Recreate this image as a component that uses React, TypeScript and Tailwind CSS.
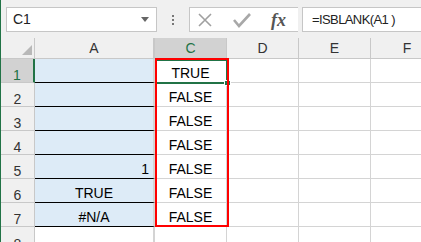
import React from "react";

const rows = [
  { n: 1, a: "", align: "", c: "TRUE" },
  { n: 2, a: "", align: "", c: "FALSE" },
  { n: 3, a: "", align: "", c: "FALSE" },
  { n: 4, a: "", align: "", c: "FALSE" },
  { n: 5, a: "1", align: "right", c: "FALSE" },
  { n: 6, a: "TRUE", align: "center", c: "FALSE" },
  { n: 7, a: "#N/A", align: "center", c: "FALSE" },
];

const font = { fontFamily: '"Liberation Sans", Arial, sans-serif' };

export default function App() {
  return (
    <div
      className="relative w-[421px] h-[242px] overflow-hidden bg-[#f0f0f0] border-l border-[#217346] text-[14px] text-black"
      style={font}
    >
      {/* Formula bar */}
      <div className="flex items-center h-[38px] pt-[1px]">
        <div className="ml-[5px] w-[151px] h-[25px] bg-white border border-[#c6c6c6] flex items-center justify-between pl-[6px] pr-[7px]">
          <span className="text-[14px] text-[#222]">C1</span>
          <svg width="8" height="5" viewBox="0 0 8 5">
            <path d="M0 0h8L4 5z" fill="#666" />
          </svg>
        </div>
        <div className="w-[32px] flex flex-col items-center gap-[2px]">
          <span className="w-[2px] h-[2px] bg-[#777]" />
          <span className="w-[2px] h-[2px] bg-[#777]" />
          <span className="w-[2px] h-[2px] bg-[#777]" />
        </div>
        <div className="w-[109px] h-[25px] bg-white border border-[#c6c6c6] border-r-0 flex items-center pl-[7px]">
          <svg width="16" height="16" viewBox="0 0 16 16" className="shrink-0">
            <path d="M2 2l12 12M14 2L2 14" stroke="#a0a0a0" strokeWidth="1.6" fill="none" />
          </svg>
          <svg width="18" height="16" viewBox="0 0 18 16" className="ml-[20px] shrink-0">
            <path d="M1 8l5 6L17 2" stroke="#a8a8a8" strokeWidth="2.6" fill="none" />
          </svg>
          <span
            className="ml-[20px] italic font-bold text-[18px] text-[#555] leading-none"
            style={{ fontFamily: '"Liberation Serif", "Times New Roman", serif' }}
          >
            fx
          </span>
        </div>
        <div className="ml-[4px] flex-1 h-[25px] bg-white border border-[#c6c6c6] border-r-0 flex items-center pl-[9px]">
          <span className="text-[13px] tracking-[-0.6px] text-[#222]">=ISBLANK(A1 )</span>
        </div>
      </div>

      {/* Grid */}
      <div className="grid grid-cols-[34px_120px_72px_72px_72px_72px] grid-rows-[21px_repeat(8,24px)] leading-[14px]">
        {/* header row */}
        <div className="relative bg-[#f0f0f0] border-r border-b border-[#c8c8c8]">
          <svg width="10" height="10" viewBox="0 0 10 10" className="absolute right-[2px] bottom-[3px]">
            <path d="M10 0V10H0z" fill="#b8b8b8" />
          </svg>
        </div>
        <div className="bg-[#f0f0f0] border-r-2 border-b border-[#c8c8c8] flex items-center justify-center text-[#333]">A</div>
        <div className="bg-[#d2d2d2] border-r border-b border-[#c8c8c8] flex items-center justify-center text-[#217346]">C</div>
        <div className="bg-[#f0f0f0] border-r border-b border-[#c8c8c8] flex items-center justify-center text-[#333]">D</div>
        <div className="bg-[#f0f0f0] border-r border-b border-[#c8c8c8] flex items-center justify-center text-[#333]">E</div>
        <div className="bg-[#f0f0f0] border-b border-[#c8c8c8] flex items-center justify-center text-[#333]">F</div>

        {rows.map((r) => (
          <React.Fragment key={r.n}>
            <div
              className={
                r.n === 1
                  ? "bg-[#d2d2d2] border-r-2 border-b border-r-[#217346] border-b-[#c8c8c8] flex items-end justify-center text-[#217346]"
                  : "bg-[#f0f0f0] border-r border-b border-[#c8c8c8] flex items-end justify-center text-[#333]"
              }
            >
              {r.n}
            </div>
            <div
              className={
                "bg-[#ddebf7] border-r-2 border-r-[#d4d4d4] border-b border-b-black flex items-end pb-[2px] px-[4px] " +
                (r.align === "right" ? "justify-end" : "justify-center")
              }
            >
              {r.a}
            </div>
            <div className="bg-white border-r border-b border-[#d4d4d4] flex items-end justify-center pb-[2px]">{r.c}</div>
            <div className="bg-white border-r border-b border-[#d4d4d4]" />
            <div className="bg-white border-r border-b border-[#d4d4d4]" />
            <div className="bg-white border-b border-[#d4d4d4]" />
          </React.Fragment>
        ))}

        {/* row 8 */}
        <div className="bg-[#f0f0f0] border-r border-[#c8c8c8] flex items-end justify-center text-[#333]">8</div>
        <div className="bg-white border-r-2 border-[#d4d4d4]" />
        <div className="bg-white border-r border-[#d4d4d4]" />
        <div className="bg-white border-r border-[#d4d4d4]" />
        <div className="bg-white border-r border-[#d4d4d4]" />
        <div className="bg-white" />
      </div>

      {/* selection on C1 */}
      <div className="absolute left-[154px] top-[59px] w-[73px] h-[25px] border-2 border-[#217346]" />
      <div className="absolute left-[223px] top-[80px] w-[7px] h-[6px] bg-[#217346] border border-white" />
      {/* red outline C1:C7 */}
      <div className="absolute left-[154px] top-[58px] w-[74px] h-[169px] border-2 border-[#ff0000]" />
    </div>
  );
}
